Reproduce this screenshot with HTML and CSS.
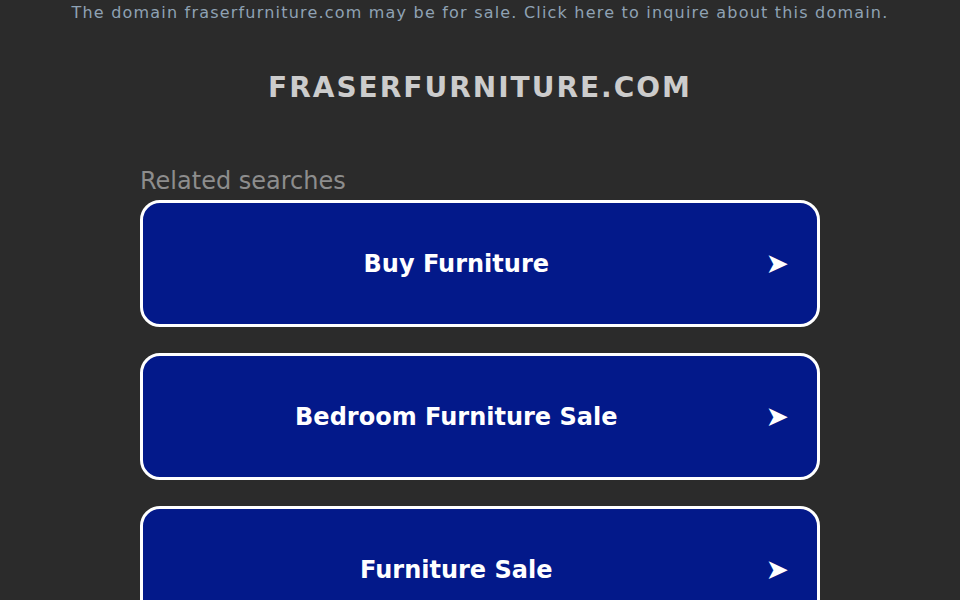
FILE: index.html
```html
<!DOCTYPE html>
<html lang="en">
<head>
    <meta charset="UTF-8">
    <meta name="viewport" content="width=device-width, initial-scale=1.0">
    <title>fraserfurniture.com</title>
    <link rel="stylesheet" href="styles.css">
</head>
<body>
    <div class="sale-banner">
        <a href="#">The domain fraserfurniture.com may be for sale. Click here to inquire about this domain.</a>
    </div>

    <h1 class="domain-title">fraserfurniture.com</h1>

    <div class="searches">
        <div class="searches-label">Related searches</div>
        <a class="search-link" href="#">
            <span class="search-text">Buy Furniture</span>
            <span class="search-arrow">&#10148;</span>
        </a>
        <a class="search-link" href="#">
            <span class="search-text">Bedroom Furniture Sale</span>
            <span class="search-arrow">&#10148;</span>
        </a>
        <a class="search-link" href="#">
            <span class="search-text">Furniture Sale</span>
            <span class="search-arrow">&#10148;</span>
        </a>
    </div>
</body>
</html>
```

FILE: styles.css
```css
body {
    margin: 0;
    background-color: #2b2b2b;
    font-family: "DejaVu Sans", Verdana, sans-serif;
    color: #fff;
}
a {
    text-decoration: none;
}
.sale-banner {
    text-align: center;
    padding-top: 4px;
    font-size: 16px;
    line-height: 18px;
    letter-spacing: 1.2px;
}
.sale-banner a {
    color: #8fa2b4;
}
.domain-title {
    margin: 49px 0 0;
    text-align: center;
    font-size: 28px;
    line-height: 34px;
    letter-spacing: 2px;
    text-transform: uppercase;
    color: #cccccc;
}
.searches {
    width: 680px;
    margin: 61px auto 0;
}
.searches-label {
    font-size: 24px;
    line-height: 30px;
    color: #8d8d8d;
    margin-bottom: 4px;
}
.search-link {
    display: flex;
    align-items: center;
    height: 121px;
    padding: 0 28px 0 4px;
    margin-bottom: 26px;
    border: 3px solid #fff;
    border-radius: 20px;
    background-color: #03198a;
    color: #fff;
    font-weight: bold;
    font-size: 24px;
}
.search-text {
    flex: 1;
    text-align: center;
}
.search-arrow {
    font-size: 28px;
    font-weight: normal;
}
```
